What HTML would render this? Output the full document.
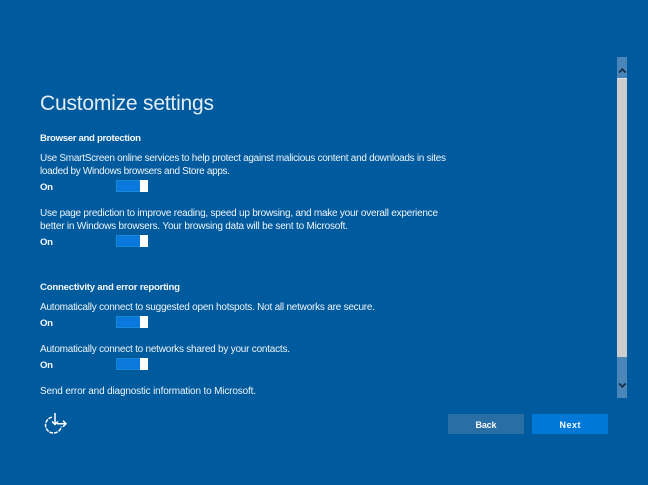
<!DOCTYPE html>
<html lang="en"><head><meta charset="utf-8"><title>Customize settings</title>
<style>
html,body{margin:0;padding:0;width:648px;height:485px;overflow:hidden;background:#005a9e}
svg{display:block}
text{font-family:"Liberation Sans",sans-serif;fill:#fff}
.h{font-size:21px;fill:#e3edf5}
.t{font-size:10px;fill:#eef4f9}
.b{font-size:9.6px;font-weight:bold;fill:#f4f8fb}
.k{font-size:9px;font-weight:bold;fill:#f4f8fb}
</style></head><body>
<svg width="648" height="485" viewBox="0 0 648 485" xmlns="http://www.w3.org/2000/svg">
<defs>
<g id="tg">
<rect x="116.5" y="0.5" width="31" height="11" fill="#0078d7" stroke="#1f86d8"/>
<rect x="118" y="2" width="22" height="8" fill="#0a78dc"/>
<rect x="140" y="0" width="8" height="12" fill="#fff"/>
</g>
</defs>
<rect width="648" height="485" fill="#005a9e"/>
<text class="h" x="40" y="110" textLength="174" lengthAdjust="spacing">Customize settings</text>
<text class="b" x="40" y="141" textLength="101" lengthAdjust="spacing">Browser and protection</text>
<text class="t" x="40" y="161" textLength="406" lengthAdjust="spacing">Use SmartScreen online services to help protect against malicious content and downloads in sites</text>
<text class="t" x="40" y="174" textLength="190" lengthAdjust="spacing">loaded by Windows browsers and Store apps.</text>
<text class="b" x="40" y="190" textLength="13" lengthAdjust="spacing">On</text>
<use href="#tg" y="180"/>
<text class="t" x="40" y="216" textLength="398" lengthAdjust="spacing">Use page prediction to improve reading, speed up browsing, and make your overall experience</text>
<text class="t" x="40" y="229" textLength="308" lengthAdjust="spacing">better in Windows browsers. Your browsing data will be sent to Microsoft.</text>
<text class="b" x="40" y="245" textLength="13" lengthAdjust="spacing">On</text>
<use href="#tg" y="235"/>
<text class="b" x="40" y="290" textLength="140" lengthAdjust="spacing">Connectivity and error reporting</text>
<text class="t" x="40" y="310" textLength="335" lengthAdjust="spacing">Automatically connect to suggested open hotspots. Not all networks are secure.</text>
<text class="b" x="40" y="326" textLength="13" lengthAdjust="spacing">On</text>
<use href="#tg" y="316"/>
<text class="t" x="40" y="352" textLength="250" lengthAdjust="spacing">Automatically connect to networks shared by your contacts.</text>
<text class="b" x="40" y="368" textLength="13" lengthAdjust="spacing">On</text>
<use href="#tg" y="358"/>
<text class="t" x="40" y="394" textLength="216" lengthAdjust="spacing">Send error and diagnostic information to Microsoft.</text>

<rect x="617" y="57" width="10" height="341" fill="#4a86b8"/>
<rect x="617" y="78" width="10" height="279" fill="#cdcdcd"/>
<rect x="617" y="78" width="10" height="1" fill="#e4e4e4"/>
<path d="M619 72.5 L622.3 69.2 L625.6 72.5" fill="none" stroke="#12304c" stroke-width="1.8"/>
<path d="M619 383.5 L622.3 386.8 L625.6 383.5" fill="none" stroke="#12304c" stroke-width="1.8"/>

<path d="M52 417.2 A8 8 0 1 0 61.4 426.5" fill="none" stroke="#fff" stroke-width="1.5" stroke-dasharray="3.8 1"/>
<path d="M55 413 V424.5 M52 421.5 L55 424.5 L58 421.5 M57 423.7 H66 M63 420.7 L66 423.7 L63 426.7" fill="none" stroke="#fff" stroke-width="1.5"/>

<rect x="448" y="414" width="76" height="20" fill="#2a6ea6"/>
<text class="k" x="475.5" y="428" textLength="21" lengthAdjust="spacing">Back</text>
<rect x="532" y="414" width="76" height="20" fill="#0078d7"/>
<text class="k" x="559.5" y="428" textLength="21" lengthAdjust="spacing">Next</text>
</svg>
</body></html>
